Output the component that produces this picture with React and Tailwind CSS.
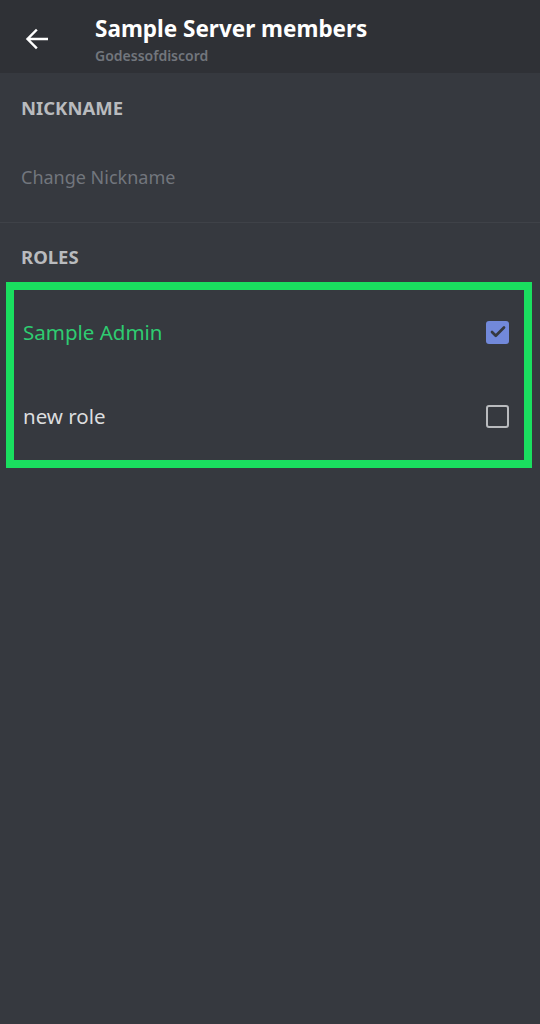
import { Check } from "lucide-react";

const font = { fontFamily: '"Noto Sans", "Open Sans", sans-serif' };

function RoleRow({ name, checked, color }) {
  return (
    <div className="flex h-[84px] items-center justify-between pl-[9px] pr-[15px]">
      <span className={`text-[20.5px] ${color}`}>{name}</span>
      {checked ? (
        <div className="flex h-[23px] w-[23px] items-center justify-center rounded-[3px] bg-[#7289da]">
          <Check size={18} strokeWidth={3.6} className="text-[#36393f]" />
        </div>
      ) : (
        <div className="h-[23px] w-[23px] rounded-[3px] border-2 border-[#b9bbbe]" />
      )}
    </div>
  );
}

export default function App() {
  return (
    <div className="min-h-screen bg-[#36393f]" style={font}>
      {/* Header */}
      <div className="flex h-[73px] items-center bg-[#2f3136]">
        <div className="flex w-[95px] justify-start pl-[25px]">
          <svg width="23" height="22" viewBox="0 0 23 22" fill="none" className="mt-[4px]">
            <path
              d="M22 11H3M11 2.5L2.5 11l8.5 8.5"
              stroke="white"
              strokeWidth="2.4"
              strokeLinecap="square"
            />
          </svg>
        </div>
        <div className="flex flex-col pt-[7px]">
          <span className="text-[22.5px] font-bold leading-[28px] text-white">
            Sample Server members
          </span>
          <span className="mt-[3px] text-[14px] font-semibold leading-[20px] text-[#72767d]">
            Godessofdiscord
          </span>
        </div>
      </div>

      {/* Nickname */}
      <div className="px-[21px] pt-[23px]">
        <div className="text-[18.5px] font-bold leading-[24px] text-[#b9bbbe]">NICKNAME</div>
        <div className="pt-[44px] pb-[32px] text-[18px] leading-[26px] text-[#72767d]">
          Change Nickname
        </div>
      </div>
      <div className="h-px bg-[#3f4248]" />

      {/* Roles */}
      <div className="px-[21px] pt-[22px] text-[18.5px] font-bold leading-[24px] text-[#b9bbbe]">
        ROLES
      </div>
      <div className="mt-[13px] ml-[6px] w-[526px] border-8 border-[#1adf5f] pb-[2px]">
        <RoleRow name="Sample Admin" checked color="text-[#2ecc71]" />
        <RoleRow name="new role" color="text-[#dcddde]" />
      </div>
    </div>
  );
}
